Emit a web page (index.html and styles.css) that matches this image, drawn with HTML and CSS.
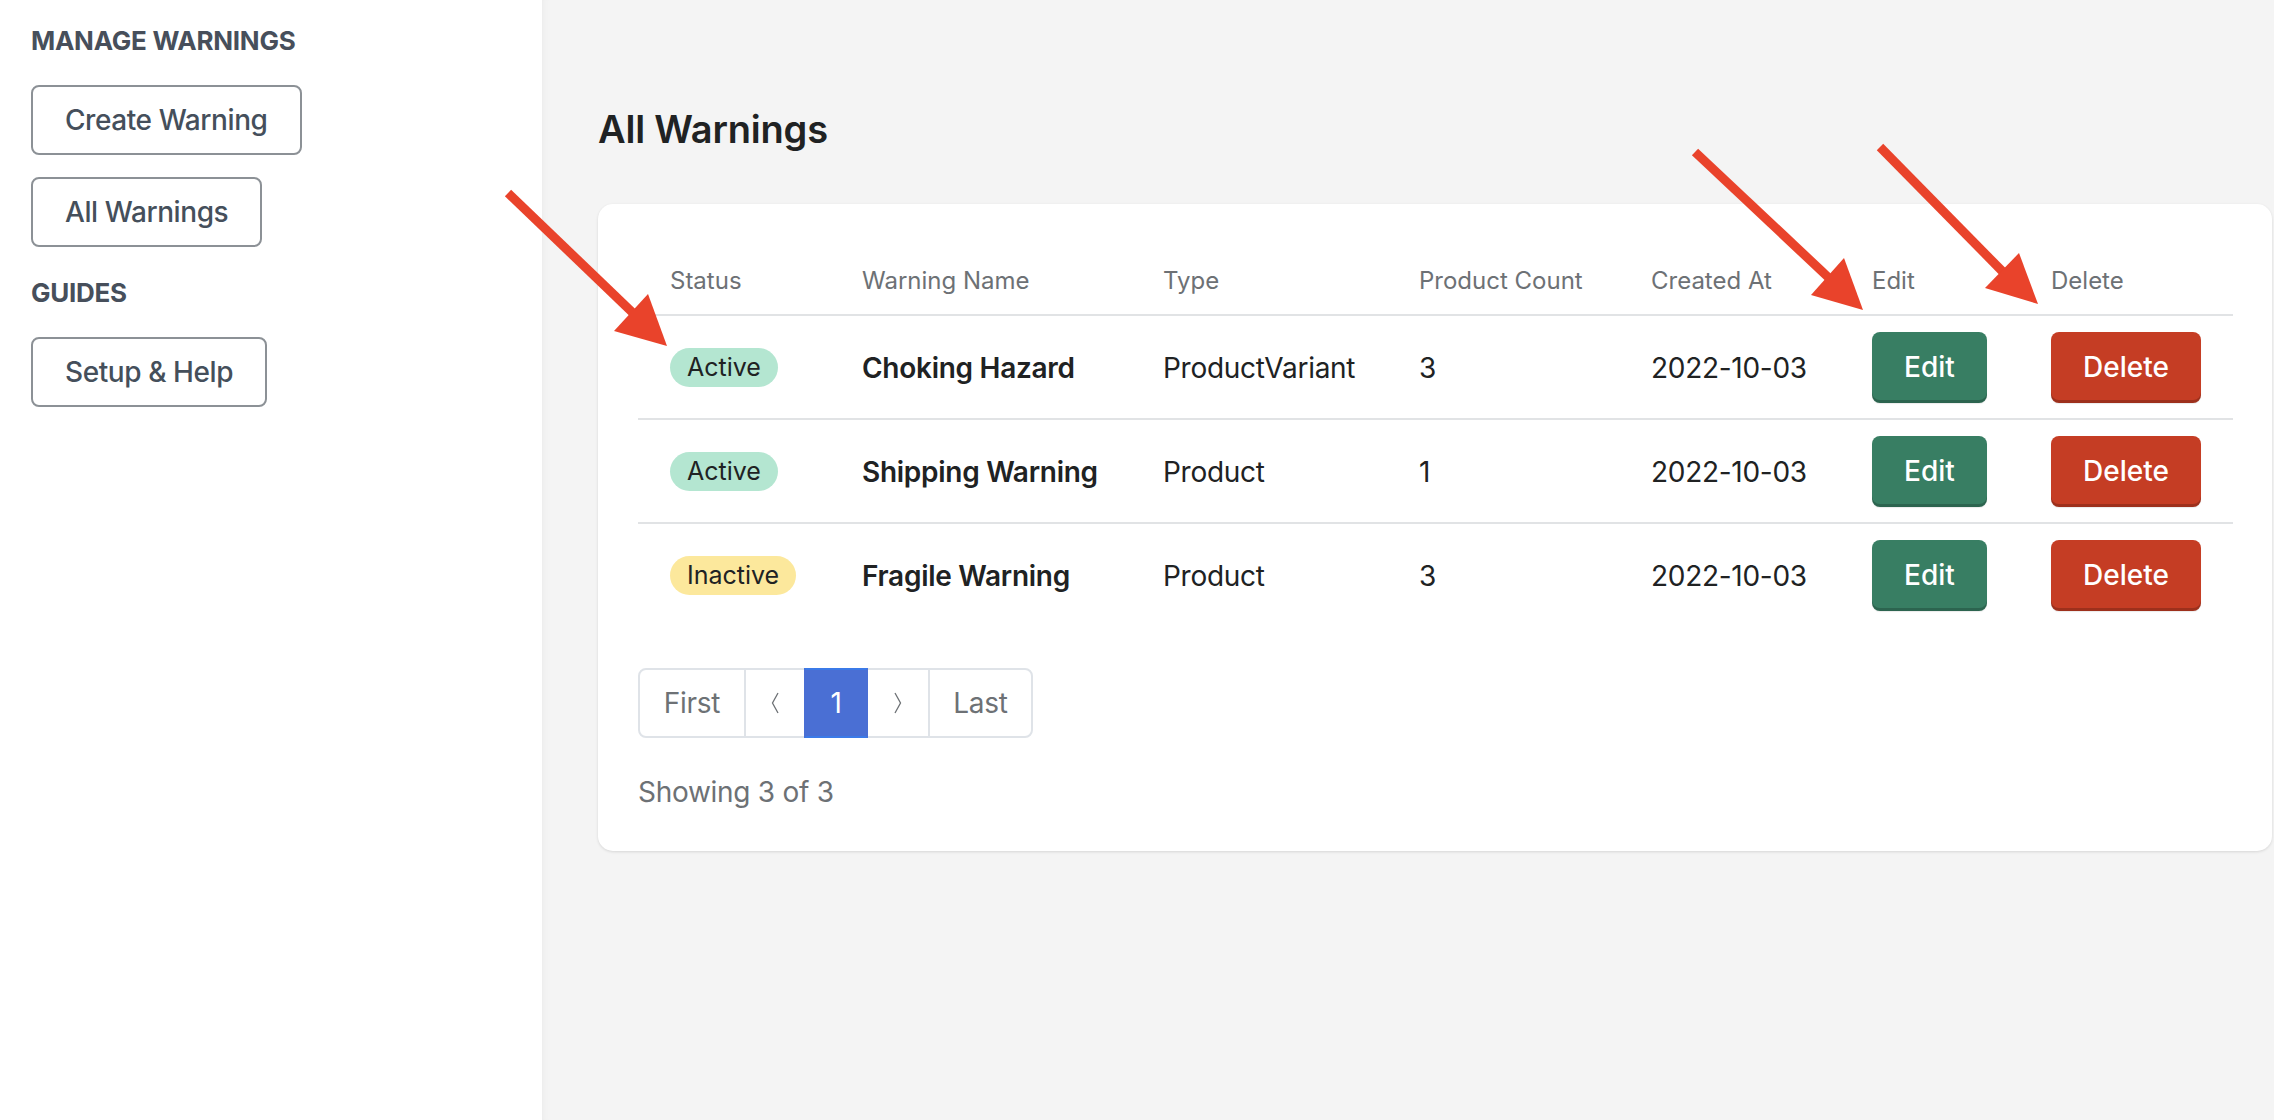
FILE: index.html
```html
<!DOCTYPE html>
<html lang="en">
<head>
<meta charset="utf-8">
<title>All Warnings</title>
<link rel="stylesheet" href="styles.css">
</head>
<body>
<div class="app">
  <aside class="sidebar">
    <h2 class="side-title">MANAGE WARNINGS</h2>
    <button class="side-btn first">Create Warning</button>
    <button class="side-btn">All Warnings</button>
    <h2 class="side-title guides">GUIDES</h2>
    <button class="side-btn first">Setup &amp; Help</button>
  </aside>
  <main class="main">
    <h1 class="page-title">All Warnings</h1>
    <section class="card">
      <table class="warnings">
        <colgroup>
          <col class="c-status"><col class="c-name"><col class="c-type"><col class="c-count"><col class="c-date"><col class="c-edit"><col class="c-delete">
        </colgroup>
        <thead>
          <tr><th>Status</th><th>Warning Name</th><th>Type</th><th>Product Count</th><th>Created At</th><th>Edit</th><th>Delete</th></tr>
        </thead>
        <tbody>
          <tr>
            <td><span class="pill active">Active</span></td>
            <td class="name">Choking Hazard</td>
            <td class="txt">ProductVariant</td>
            <td class="txt">3</td>
            <td class="txt">2022-10-03</td>
            <td><button class="btn edit">Edit</button></td>
            <td><button class="btn delete">Delete</button></td>
          </tr>
          <tr>
            <td><span class="pill active">Active</span></td>
            <td class="name">Shipping Warning</td>
            <td class="txt">Product</td>
            <td class="txt">1</td>
            <td class="txt">2022-10-03</td>
            <td><button class="btn edit">Edit</button></td>
            <td><button class="btn delete">Delete</button></td>
          </tr>
          <tr>
            <td><span class="pill inactive">Inactive</span></td>
            <td class="name">Fragile Warning</td>
            <td class="txt">Product</td>
            <td class="txt">3</td>
            <td class="txt">2022-10-03</td>
            <td><button class="btn edit">Edit</button></td>
            <td><button class="btn delete">Delete</button></td>
          </tr>
        </tbody>
      </table>
      <nav class="pager">
        <span class="seg seg-first">First</span>
        <span class="seg seg-prev"><svg class="chev" viewBox="0 0 8 22" width="8" height="22"><path d="M7 1 L1.5 11 L7 21"/></svg></span>
        <span class="seg seg-cur">1</span>
        <span class="seg seg-next"><svg class="chev" viewBox="0 0 8 22" width="8" height="22"><path d="M1 1 L6.5 11 L1 21"/></svg></span>
        <span class="seg seg-last">Last</span>
      </nav>
      <p class="showing">Showing 3 of 3</p>
    </section>
  </main>
</div>
<svg class="annotations" viewBox="0 0 2274 1120" width="2274" height="1120">
  <g class="arrow">
    <line x1="508" y1="193" x2="633" y2="313"/>
    <polygon points="667,346 614,331 648,294"/>
  </g>
  <g class="arrow">
    <line x1="1695" y1="152" x2="1829" y2="278"/>
    <polygon points="1863,310 1811,295 1844,258"/>
  </g>
  <g class="arrow">
    <line x1="1880" y1="147" x2="2003" y2="272"/>
    <polygon points="2038,304 1985,288 2019,253"/>
  </g>
</svg>
</body>
</html>
```

FILE: styles.css
```css
* { box-sizing: border-box; }

html, body {
  margin: 0;
  padding: 0;
}

body {
  position: relative;
  width: 2274px;
  height: 1120px;
  overflow: hidden;
  font-family: Inter, "Open Sans", "Liberation Sans", sans-serif;
  color: #202223;
}

.app {
  display: flex;
  height: 1120px;
}

/* Sidebar */
.sidebar {
  width: 542px;
  flex: 0 0 542px;
  background: #ffffff;
  display: flex;
  flex-direction: column;
  align-items: flex-start;
  padding: 25px 0 0 31px;
}

.side-title {
  margin: 0;
  font-size: 26px;
  line-height: 32px;
  font-weight: 700;
  color: #474f5b;
  letter-spacing: -0.01em;
}

.side-title.guides {
  margin-top: 30px;
}

.side-btn {
  height: 70px;
  margin-top: 22px;
  padding: 0 32px;
  border: 2px solid #8c9196;
  border-radius: 8px;
  background: #ffffff;
  font-family: inherit;
  font-size: 28px;
  font-weight: 500;
  color: #454f5b;
  letter-spacing: -0.015em;
}

.side-btn.first {
  margin-top: 28px;
}

/* Main */
.main {
  flex: 1;
  background: #f4f4f4;
  box-shadow: inset 6px 0 10px -8px rgba(0, 0, 0, 0.08);
  padding: 106px 2px 0 56px;
}

.page-title {
  margin: 0 0 52px;
  font-size: 38px;
  line-height: 46px;
  font-weight: 600;
  color: #202223;
  letter-spacing: -0.005em;
}

.card {
  background: #ffffff;
  border-radius: 15px;
  padding: 42px 39px 42px 40px;
  box-shadow: 0 1px 3px rgba(0, 0, 0, 0.12);
}

/* Table */
.warnings {
  width: 1595px;
  table-layout: fixed;
  border-collapse: separate;
  border-spacing: 0;
}

.c-status { width: 192px; }
.c-name { width: 301px; }
.c-type { width: 256px; }
.c-count { width: 232px; }
.c-date { width: 221px; }
.c-edit { width: 179px; }
.c-delete { width: 214px; }

.warnings th {
  height: 70px;
  padding: 2px 0 0 32px;
  text-align: left;
  font-size: 24px;
  line-height: 30px;
  font-weight: 400;
  color: #6d7175;
  border-bottom: 2px solid #e1e3e5;
}

.warnings td {
  height: 104px;
  padding: 0 0 0 32px;
  font-size: 28px;
  line-height: 34px;
  color: #202223;
  border-bottom: 2px solid #e1e3e5;
  letter-spacing: -0.01em;
  white-space: nowrap;
}

.warnings td.txt,
.warnings td.name {
  padding-top: 2px;
}

.warnings tbody tr:last-child td {
  border-bottom: none;
  height: 102px;
}

.warnings td.name {
  font-weight: 600;
}

.pill {
  display: inline-block;
  height: 39px;
  line-height: 39px;
  padding: 0 17px;
  border-radius: 20px;
  font-size: 25px;
  color: #202223;
  letter-spacing: 0;
}

.pill.active { background: #b4e6d1; }
.pill.inactive { background: #fce89c; }

.btn {
  height: 71px;
  padding: 0 32px;
  border: none;
  border-radius: 8px;
  font-family: inherit;
  font-size: 28px;
  font-weight: 500;
  color: #ffffff;
  letter-spacing: 0;
  box-shadow: inset 0 -3px 0 rgba(0, 0, 0, 0.2), 0 1px 1px rgba(0, 0, 0, 0.08);
}

.btn.edit { background: #387e63; }
.btn.delete { background: #c53d24; }

/* Pagination */
.pager {
  display: flex;
  margin-top: 42px;
  height: 70px;
}

.seg {
  display: flex;
  align-items: center;
  justify-content: center;
  height: 70px;
  margin-left: -2px;
  border: 2px solid #dfe3e8;
  background: #ffffff;
  font-size: 28px;
  color: #6d7175;
  letter-spacing: -0.01em;
}

.seg-first {
  width: 108px;
  margin-left: 0;
  border-radius: 8px 0 0 8px;
}

.seg-prev { width: 62px; }

.seg-cur {
  position: relative;
  z-index: 1;
  width: 64px;
  background: #4a6fd4;
  border-color: #3b7ae8 #4a6fd4;
  color: #ffffff;
}

.seg-next { width: 64px; }

.seg-last {
  width: 105px;
  border-radius: 0 8px 8px 0;
}

.chev path {
  fill: none;
  stroke: #6d7175;
  stroke-width: 1.3;
}

.showing {
  margin: 37px 0 0;
  font-size: 28px;
  line-height: 34px;
  color: #6d7175;
  letter-spacing: -0.01em;
}

/* Annotation arrows */
.annotations {
  position: absolute;
  top: 0;
  left: 0;
  pointer-events: none;
}

.arrow line {
  stroke: #e9432b;
  stroke-width: 9;
}

.arrow polygon {
  fill: #e9432b;
}
```
